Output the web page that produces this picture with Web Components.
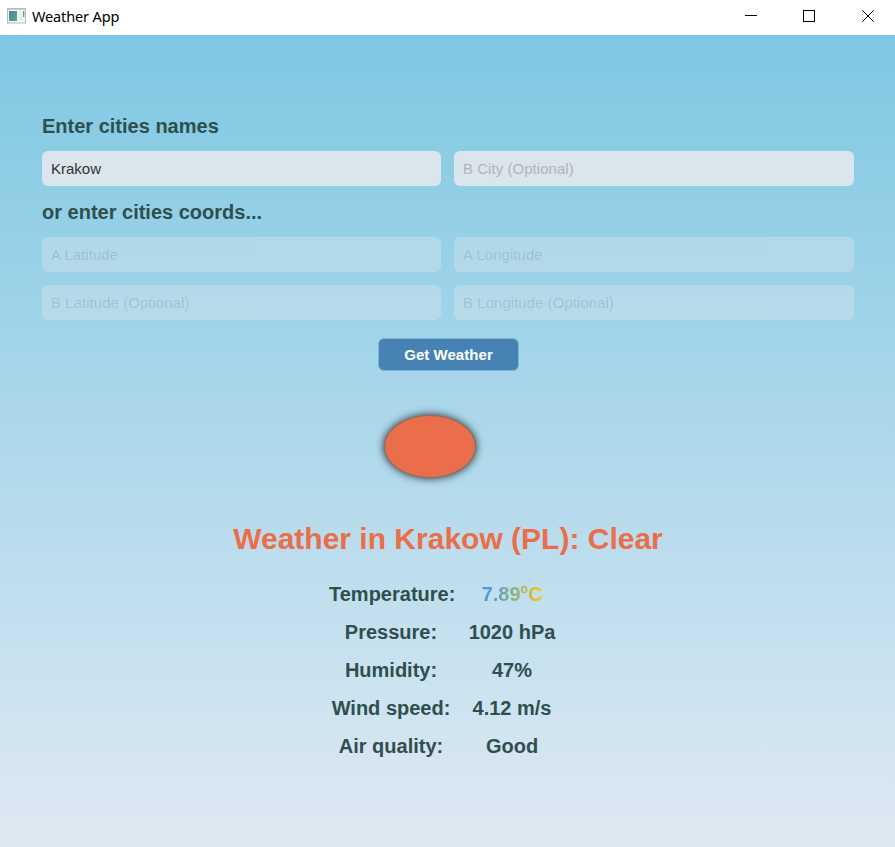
<!DOCTYPE html>
<html lang="en">
<head>
<meta charset="utf-8">
<title>Weather App</title>
<style>
html,body{margin:0;height:100%;overflow:hidden;background:#fff}
body{font-family:"Liberation Sans",Arial,sans-serif;color:#2f4f4f}
</style>
</head>
<body>
<weather-window></weather-window>
<script>
class Base extends HTMLElement {
  constructor() {
    super();
    this.attachShadow({mode: 'open'}).innerHTML = this.render();
  }
}

customElements.define('title-bar', class extends Base {
  render() { return `
<style>
:host{display:flex;height:35px;background:#fff;color:#000;align-items:flex-start;box-sizing:border-box;padding-left:7px}
.icon{margin-top:8px;flex:none}
.name{font:14.5px/20px "Noto Sans","Open Sans",sans-serif;margin:6px auto 0 6px;letter-spacing:-.14px;white-space:nowrap}
.controls{display:flex;gap:45px;padding:10px 20px 0 0}
.controls svg:nth-child(2){margin-right:1px}
svg{display:block}
</style>
<svg class="icon" width="19" height="16" viewBox="0 0 19 16">
  <defs><linearGradient id="g" x2="1" y2="1"><stop stop-color="#4b80a8"/><stop offset="1" stop-color="#55ac7c"/></linearGradient></defs>
  <rect x=".5" y=".5" width="18" height="14.5" fill="#f4f6f8" stroke="#b4b9bf"/>
  <path d="M1 1.5h17" stroke="#c9d0d8"/>
  <rect x="2" y="3" width="8" height="10" fill="url(#g)"/>
  <rect x="11.5" y="3" width="4" height="10" fill="#e9edf0"/>
  <rect x="16" y="3" width="1.3" height="6" fill="#60a399"/>
</svg>
<span class="name"><slot></slot></span>
<div class="controls">
  <svg width="13" height="13" shape-rendering="crispEdges"><path d="M0 5.5h12" stroke="#000"/></svg>
  <svg width="13" height="13" shape-rendering="crispEdges"><path d="M.5.5h11v11H.5z" fill="none" stroke="#000"/></svg>
  <svg width="13" height="13"><path d="M.3.3l11.4 11.4M11.7.3L.3 11.7" stroke="#000" stroke-width="1"/></svg>
</div>`; }
});

customElements.define('text-field', class extends Base {
  render() { return `
<style>
:host{display:block;height:35px;min-width:0}
:host([disabled]){opacity:.4}
.box{box-sizing:border-box;height:35px;border-radius:6px;background:#dae6eb;padding:1px 9px 0;font-size:15px;line-height:34px;color:#333}
:host([empty]) .box{color:#b2b4b5;letter-spacing:.04px}
:host([disabled]) .box{color:#a9adae}
</style><div class="box"><slot></slot></div>`; }
});

customElements.define('section-label', class extends Base {
  render() { return `
<style>:host{display:block;font-weight:bold;font-size:20px;line-height:24px;white-space:nowrap}</style><slot></slot>`; }
});

customElements.define('push-button', class extends Base {
  render() { return `
<style>
:host{display:block;box-sizing:border-box;width:141px;height:33px;border:1px solid #80b6d8;border-radius:6px;background:#4682b4;color:#fff;font:bold 15px/31px "Liberation Sans",Arial,sans-serif;letter-spacing:.05px;text-align:center}
</style><slot></slot>`; }
});

customElements.define('sun-icon', class extends Base {
  render() { return `
<style>
:host{display:block;box-sizing:border-box;width:92px;height:63px;border-radius:50%;background:#eb6e4b;border:1px solid #956a60;box-shadow:0 0 8px 0 rgba(0,0,0,.85)}
</style>`; }
});

customElements.define('weather-row', class extends Base {
  render() { return `
<style>
:host{display:grid;grid-template-columns:124px 87px;column-gap:15.5px;height:38px;line-height:38px;font-size:20px;font-weight:bold;text-align:center;white-space:nowrap}
::slotted(.temp){background:linear-gradient(90deg,#3b9ae8,#a0b46e 65%,#f5c60a 95%);-webkit-background-clip:text;background-clip:text;color:transparent}
</style><span><slot name="label"></slot></span><span><slot></slot></span>`; }
});

customElements.define('weather-window', class extends Base {
  render() { return `
<style>
:host{display:flex;flex-direction:column;width:895px;height:847px}
main{flex:1;box-sizing:border-box;background:linear-gradient(#7ec8e3,#dfe9f3);padding:79px 41px 0 42px;display:flex;flex-direction:column}
.grid{display:grid;grid-template-columns:399px 400px;gap:13px}
.cities{margin:13px 0 14px}
.coords{margin-top:13px}
push-button{margin:18px 0 0 336px}
sun-icon{margin:44px 0 0 342px}
h1{margin:41px 0 0;font-size:30px;line-height:40px;font-weight:bold;color:#eb6e4b;text-align:center;white-space:nowrap}
.rows{margin:16px 0 0 287px}
</style>
<title-bar>Weather App</title-bar>
<main>
  <section-label>Enter cities names</section-label>
  <div class="grid cities">
    <text-field>Krakow</text-field>
    <text-field empty>B City (Optional)</text-field>
  </div>
  <section-label>or enter cities coords...</section-label>
  <div class="grid coords">
    <text-field empty disabled>A Latitude</text-field>
    <text-field empty disabled>A Longitude</text-field>
    <text-field empty disabled>B Latitude (Optional)</text-field>
    <text-field empty disabled>B Longitude (Optional)</text-field>
  </div>
  <push-button>Get Weather</push-button>
  <sun-icon></sun-icon>
  <h1>Weather in Krakow (PL): Clear</h1>
  <div class="rows">
    <weather-row><span slot="label">Temperature:</span><span class="temp">7.89ºC</span></weather-row>
    <weather-row><span slot="label">Pressure:</span>1020 hPa</weather-row>
    <weather-row><span slot="label">Humidity:</span>47%</weather-row>
    <weather-row><span slot="label">Wind speed:</span>4.12 m/s</weather-row>
    <weather-row><span slot="label">Air quality:</span>Good</weather-row>
  </div>
</main>`; }
});
</script>
</body>
</html>
